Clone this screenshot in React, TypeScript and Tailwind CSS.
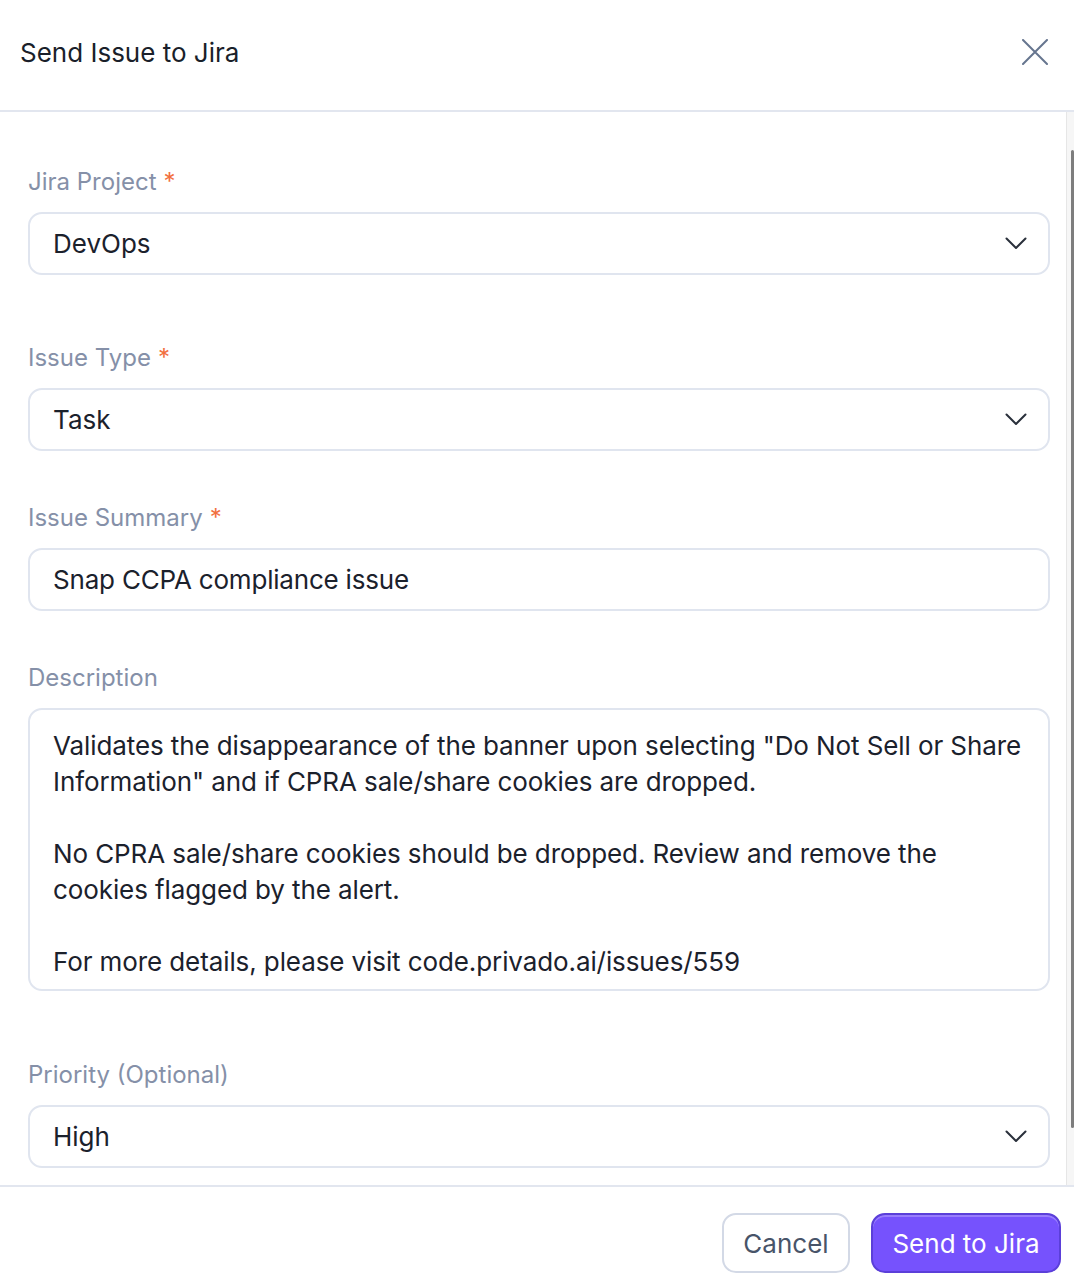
const font = { fontFamily: "Inter, 'Noto Sans', sans-serif" };

function Label({ text, required }: { text: string; required?: boolean }) {
  return (
    <div className="text-[24px] leading-[30px] text-[#8590a8] mb-[15px]">
      {text}
      {required && <span className="text-[#f2703f] ml-[7px]">*</span>}
    </div>
  );
}

function Chevron() {
  return (
    <svg width="22" height="13" viewBox="0 0 22 13" fill="none" className="shrink-0">
      <polyline points="1.5,1.5 11,11 20.5,1.5" stroke="#2a303b" strokeWidth="2" strokeLinecap="round" strokeLinejoin="round" />
    </svg>
  );
}

function Select({ value }: { value: string }) {
  return (
    <div className="h-[63px] rounded-[14px] border-2 border-[#e0e5ef] bg-white flex items-center justify-between pl-[23px] pr-[21px]">
      <span className="text-[26px] text-[#1b212c]">{value}</span>
      <Chevron />
    </div>
  );
}

export default function App() {
  return (
    <div className="w-[1074px] h-[1288px] bg-white flex flex-col overflow-hidden" style={font}>
      {/* Header */}
      <div className="h-[112px] shrink-0 flex items-center justify-between pl-[20px] pr-[26px] border-b-2 border-[#e2e6ef]">
        <h1 className="text-[26px] text-[#1a1f2a] font-normal -mt-[6px]">Send Issue to Jira</h1>
        <svg width="26" height="26" viewBox="0 0 26 26" fill="none" className="-mt-[6px]">
          <path d="M1 1L25 25M25 1L1 25" stroke="#66758f" strokeWidth="2" strokeLinecap="round" />
        </svg>
      </div>

      {/* Body */}
      <div className="flex h-[1073px] shrink-0 overflow-hidden">
        <div className="flex-1 pl-[28px] pr-[16px] pt-[55px]">
          <Label text="Jira Project" required />
          <Select value="DevOps" />

          <div className="mt-[68px]">
            <Label text="Issue Type" required />
            <Select value="Task" />
          </div>

          <div className="mt-[52px]">
            <Label text="Issue Summary" required />
            <div className="h-[63px] rounded-[14px] border-2 border-[#e0e5ef] flex items-center pl-[23px]">
              <span className="text-[26px] text-[#1b212c] tracking-[-0.2px]">Snap CCPA compliance issue</span>
            </div>
          </div>

          <div className="mt-[52px]">
            <Label text="Description" />
            <div className="h-[283px] rounded-[14px] border-2 border-[#e0e5ef] pl-[23px] pr-[10px] pt-[18px] text-[26px] leading-[36px] text-[#1b212c] tracking-[-0.1px]">
              <p>
                Validates the disappearance of the banner upon selecting "Do Not Sell or Share Information" and if CPRA sale/share cookies are dropped.
              </p>
              <p className="mt-[36px]">
                No CPRA sale/share cookies should be dropped. Review and remove the cookies flagged by the alert.
              </p>
              <p className="mt-[36px]">For more details, please visit code.privado.ai/issues/559</p>
            </div>
          </div>

          <div className="mt-[69px]">
            <Label text="Priority (Optional)" />
            <Select value="High" />
          </div>
        </div>

        {/* Scrollbar */}
        <div className="w-[8px] shrink-0 bg-[#f6f6f6] border-l border-[#e6e6e6] relative">
          <div className="absolute right-0 top-[38px] h-[978px] w-[3px] bg-[#7d7d7d] rounded-full" />
        </div>
      </div>

      {/* Footer */}
      <div className="flex-1 border-t-2 border-[#e2e6ef] flex justify-end items-start pt-[26px] pr-[13px] gap-[21px]">
        <button className="h-[60px] w-[128px] rounded-[14px] border-2 border-[#d3d9e6] bg-white text-[26px] text-[#485469]">
          Cancel
        </button>
        <button className="h-[60px] w-[190px] rounded-[14px] border-2 border-[#5b3fd9] bg-[#7652fd] text-[26px] text-white shadow-[inset_0_2px_0_rgba(255,255,255,0.25)]">
          Send to Jira
        </button>
      </div>
    </div>
  );
}
